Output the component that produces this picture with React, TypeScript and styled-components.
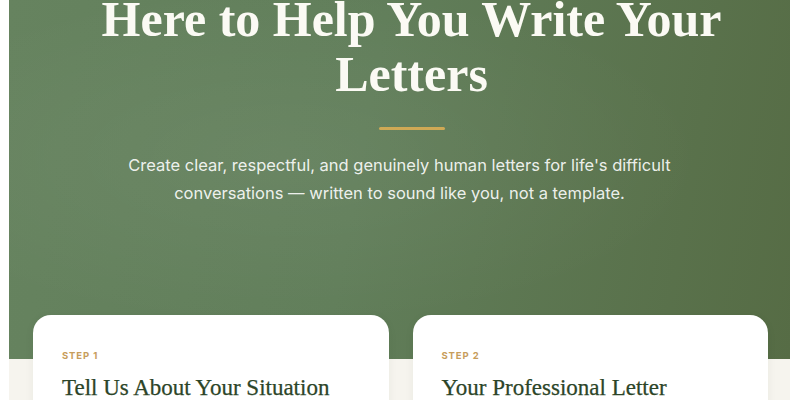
import React from "react";
import styled, { createGlobalStyle } from "styled-components";

const GlobalStyle = createGlobalStyle`
  html, body {
    margin: 0;
    padding: 0;
    background: #ffffff;
    overflow: hidden;
  }
`;

const Page = styled.div`
  padding: 0 10px 0 9px;
  margin-top: -8px;
  height: 420px;
`;

const Hero = styled.section`
  display: flex;
  flex-direction: column;
  align-items: center;
  padding: 0 40px 152px;
  background:
    radial-gradient(ellipse at 35% 45%, rgba(255, 255, 255, 0.05), transparent 60%),
    linear-gradient(100deg, #66835f 0%, #617e5a 45%, #566c45 100%);
  text-align: center;
`;

const Heading = styled.div`
  display: flex;
  flex-direction: column;
  align-items: center;
  padding-left: 24px;
`;

const Title = styled.h1`
  margin: 0;
  font-family: "Liberation Serif", "Times New Roman", serif;
  font-size: 50px;
  line-height: 55px;
  font-weight: 700;
  color: #fbfaf4;
  max-width: 680px;
`;

const Divider = styled.div`
  width: 66px;
  height: 3px;
  margin-top: 25px;
  background: #cfa955;
  border-radius: 2px;
`;

const Subtitle = styled.p`
  margin: 21px 0 0;
  font-family: Inter, "Noto Sans", sans-serif;
  font-size: 16.5px;
  line-height: 28px;
  color: rgba(255, 255, 255, 0.9);
  max-width: 600px;
`;

const Steps = styled.section`
  display: flow-root;
  background: #f6f4ee;
  padding: 0 22px 0 24px;
  height: 200px;
`;

const StepGrid = styled.div`
  display: grid;
  grid-template-columns: 1fr 1fr;
  gap: 24px;
  margin-top: -44px;
`;

const Card = styled.article`
  background: #ffffff;
  border-radius: 18px;
  padding: 34px 29px 40px;
  min-height: 120px;
  box-shadow: 0 2px 10px rgba(40, 50, 30, 0.06);
`;

const StepLabel = styled.div`
  font-family: Inter, "Noto Sans", sans-serif;
  font-size: 9.5px;
  font-weight: 700;
  letter-spacing: 0.9px;
  line-height: 14px;
  color: #c79d5b;
`;

const CardTitle = styled.h2`
  margin: 9px 0 0;
  font-family: "Liberation Serif", "Times New Roman", serif;
  font-size: 23px;
  line-height: 31px;
  font-weight: 400;
  color: #2c4528;
  -webkit-text-stroke: 0.25px #2c4528;
`;

const steps = [
  { label: "STEP 1", title: "Tell Us About Your Situation" },
  { label: "STEP 2", title: "Your Professional Letter" },
];

const App: React.FC = () => {
  return (
    <>
      <GlobalStyle />
      <Page>
        <Hero>
          <Heading>
            <Title>Here to Help You Write Your Letters</Title>
            <Divider />
          </Heading>
          <Subtitle>
            Create clear, respectful, and genuinely human letters for life's difficult
            conversations — written to sound like you, not a template.
          </Subtitle>
        </Hero>
        <Steps>
          <StepGrid>
            {steps.map((s) => (
              <Card key={s.label}>
                <StepLabel>{s.label}</StepLabel>
                <CardTitle>{s.title}</CardTitle>
              </Card>
            ))}
          </StepGrid>
        </Steps>
      </Page>
    </>
  );
};

export default App;
